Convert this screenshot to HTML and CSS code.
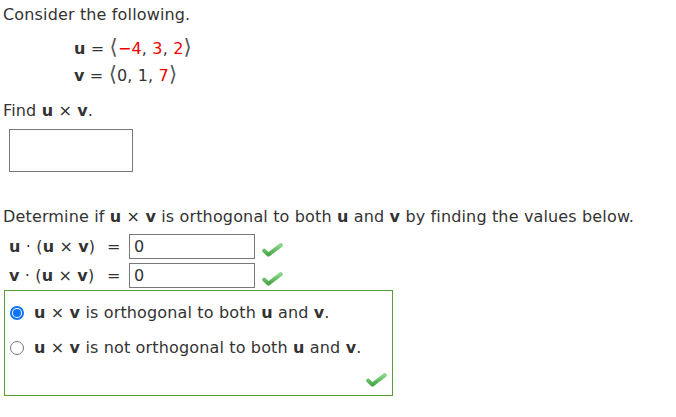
FILE: index.html
```html
<!DOCTYPE html>
<html>
<head>
<meta charset="utf-8">
<link rel="stylesheet" href="styles.css">
</head>
<body>
<svg width="0" height="0" class="defs"><defs><linearGradient id="cg" x1="0" y1="0" x2="0" y2="1"><stop offset="0" stop-color="#86d886"/><stop offset="1" stop-color="#4aa64a"/></linearGradient></defs></svg>
<div class="page">
  <p class="intro">Consider the following.</p>
  <div class="vectors">
    <div class="vec"><b>u</b> = <span class="br">⟨</span><span class="red">−4</span>, <span class="red">3</span>, <span class="red">2</span><span class="br">⟩</span></div>
    <div class="vec"><b>v</b> = <span class="br">⟨</span>0, 1, <span class="red">7</span><span class="br">⟩</span></div>
  </div>
  <p class="find">Find <b>u</b> × <b>v</b>.</p>
  <div class="answer"></div>
  <p class="determine">Determine if <b>u</b> × <b>v</b> is orthogonal to both <b>u</b> and <b>v</b> by finding the values below.</p>
  <div class="rows">
    <div class="row">
      <span class="lbl"><b>u</b> · (<b>u</b> × <b>v</b>)</span><span class="eq">=</span>
      <div class="field">0</div>
      <svg class="check" viewBox="0 0 21 14" width="21" height="14"><path d="M2.2 7.6 L6.4 11.6 L18.8 2.2" fill="none" stroke="url(#cg)" stroke-width="4" stroke-linecap="round" stroke-linejoin="round"/></svg>
    </div>
    <div class="row">
      <span class="lbl"><b>v</b> · (<b>u</b> × <b>v</b>)</span><span class="eq">=</span>
      <div class="field">0</div>
      <svg class="check" viewBox="0 0 21 14" width="21" height="14"><path d="M2.2 7.6 L6.4 11.6 L18.8 2.2" fill="none" stroke="url(#cg)" stroke-width="4" stroke-linecap="round" stroke-linejoin="round"/></svg>
    </div>
  </div>
  <div class="choices">
    <label class="choice"><span class="radio on"></span><span><b>u</b> × <b>v</b> is orthogonal to both <b>u</b> and <b>v</b>.</span></label>
    <label class="choice"><span class="radio"></span><span><b>u</b> × <b>v</b> is not orthogonal to both <b>u</b> and <b>v</b>.</span></label>
    <div class="choice-foot">
      <svg class="check" viewBox="0 0 21 14" width="21" height="14"><path d="M2.2 7.6 L6.4 11.6 L18.8 2.2" fill="none" stroke="url(#cg)" stroke-width="4" stroke-linecap="round" stroke-linejoin="round"/></svg>
    </div>
  </div>
</div>
</body>
</html>
```

FILE: styles.css
```css
html, body {
  margin: 0;
  padding: 0;
  background: #fff;
}
.defs {
  position: absolute;
  width: 0;
  height: 0;
}
.page {
  font-family: "DejaVu Sans", Verdana, sans-serif;
  font-size: 16px;
  letter-spacing: 0.15px;
  color: #333;
  padding: 5px 0 0 3px;
}
p { margin: 0; }
b { font-weight: bold; }
.intro {
  line-height: 20px;
}
.vectors {
  padding: 10px 0 0 71px;
}
.vec {
  height: 27px;
  line-height: 27px;
}
.br {
  font-size: 21px;
  line-height: 10px;
  color: #555;
}
.red { color: #ee0000; }
.find {
  margin-top: 12px;
  line-height: 20px;
}
.answer {
  margin: 8px 0 0 6px;
  width: 122px;
  height: 41px;
  border: 1px solid #777;
}
.determine {
  margin-top: 35px;
  line-height: 20px;
}
.rows {
  margin-top: 5px;
  padding-left: 6px;
}
.row {
  display: flex;
  align-items: center;
  height: 29px;
}
.lbl {
  width: 98px;
  white-space: nowrap;
}
.eq {
  width: 22px;
}
.field {
  width: 120px;
  height: 23px;
  border: 1px solid #777;
  padding-left: 4px;
  line-height: 23px;
  box-sizing: content-box;
}
.row .check {
  margin-left: 7px;
  margin-top: 6px;
}
.choices {
  width: 387px;
  height: 104px;
  border: 1px solid #5a9e32;
  margin-left: 1px;
}
.choice {
  display: flex;
  align-items: center;
  height: 35px;
  padding-left: 5px;
}
.choice:first-child { margin-top: 4px; }
.radio {
  width: 12px;
  height: 12px;
  border: 1px solid #767676;
  border-radius: 50%;
  margin-right: 10px;
  position: relative;
  flex: none;
}
.radio.on {
  border: 2px solid #0b72ff;
  width: 10px;
  height: 10px;
}
.radio.on::after {
  content: "";
  position: absolute;
  left: 1px;
  top: 1px;
  width: 8px;
  height: 8px;
  border-radius: 50%;
  background: #0b72ff;
}
.choice-foot {
  display: flex;
  justify-content: flex-end;
  padding-right: 5px;
  padding-top: 8px;
}
```
